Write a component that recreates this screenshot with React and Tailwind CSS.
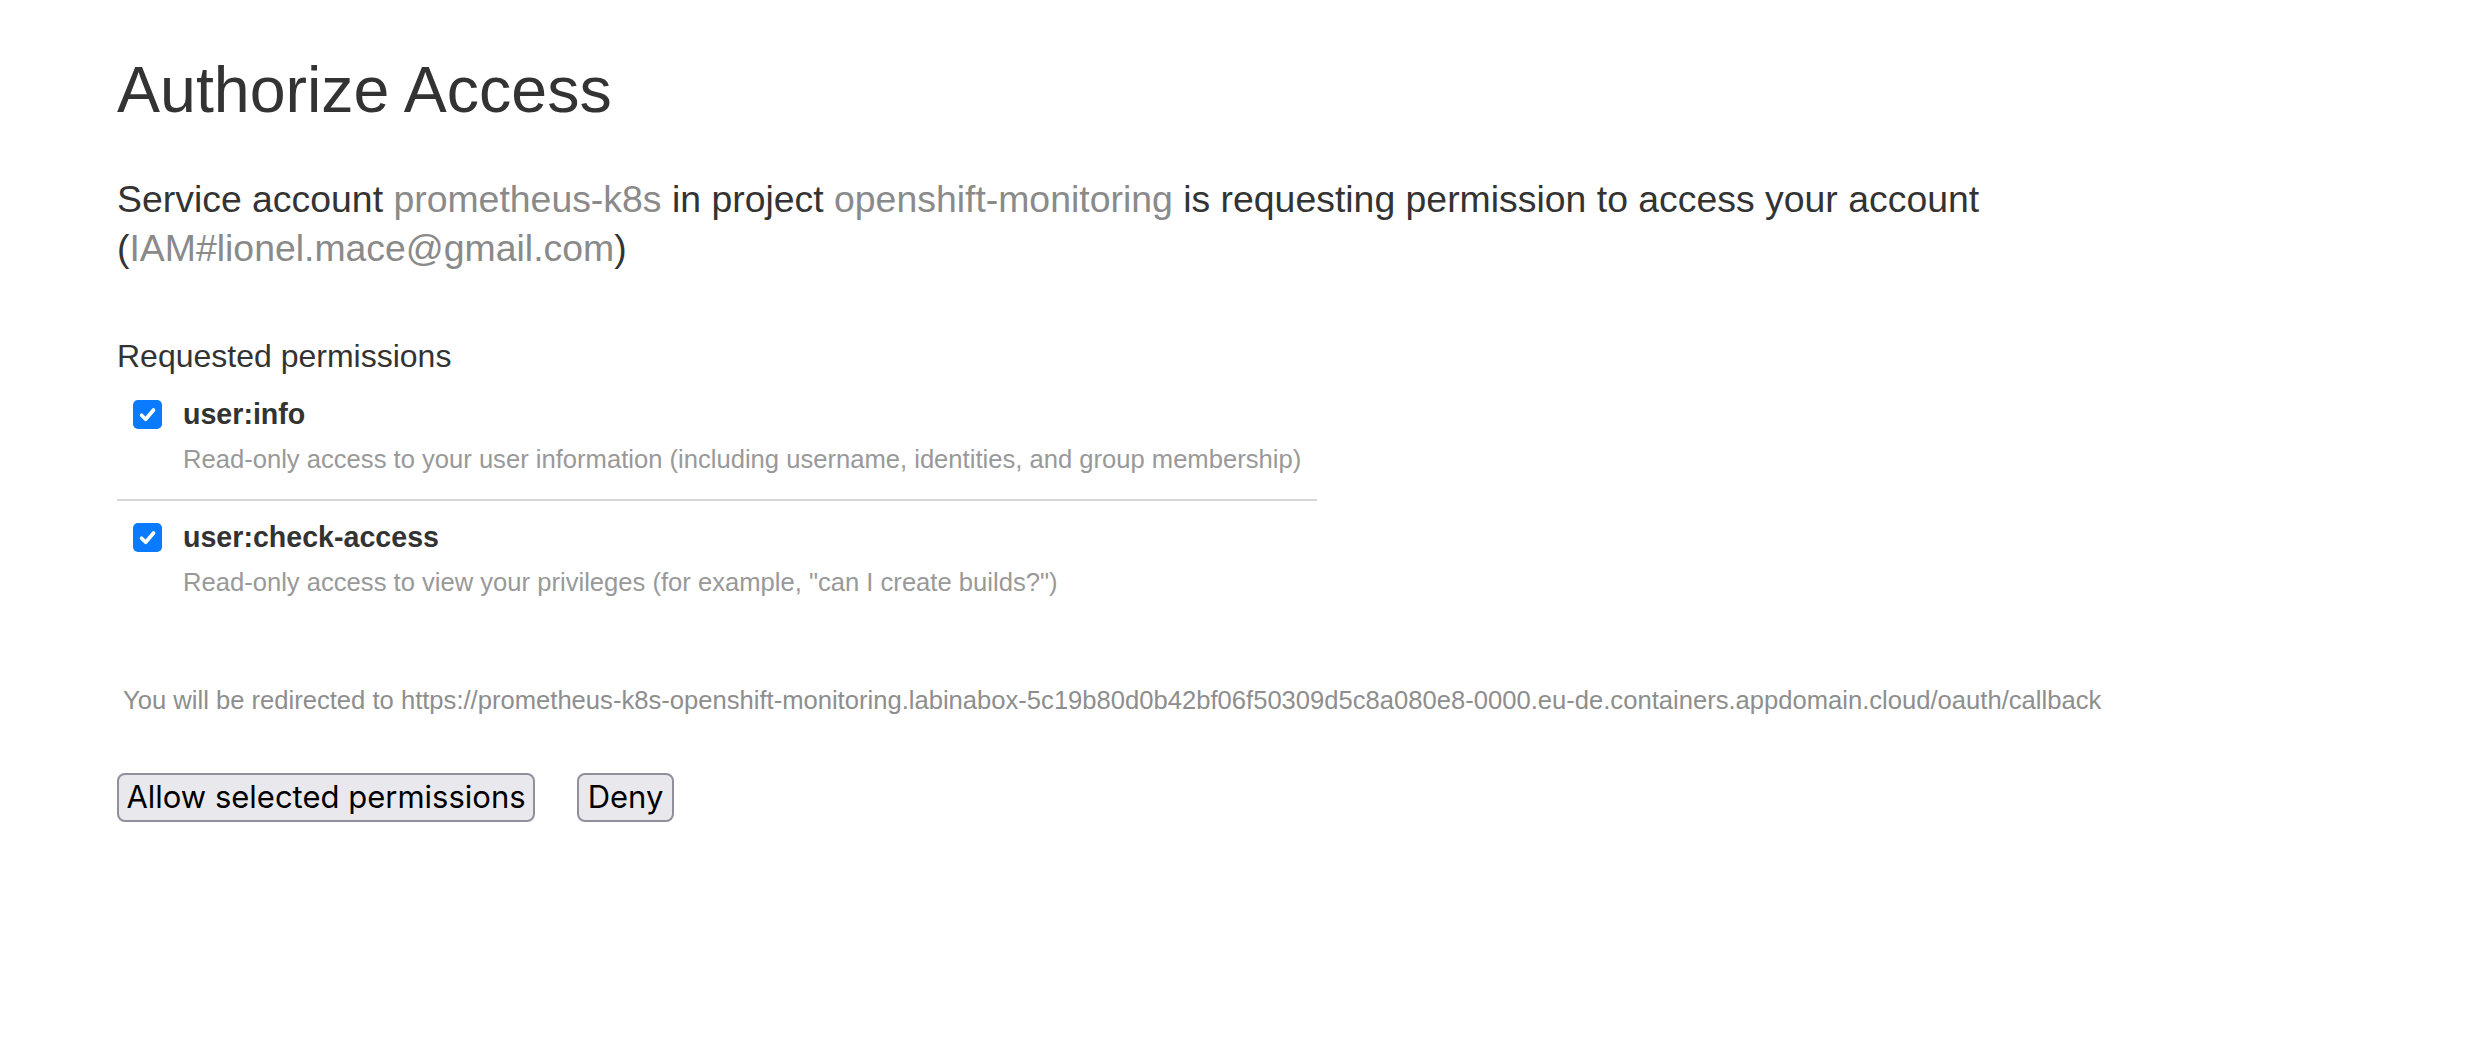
import React, { useState } from 'react';

const permissions = [
  {
    name: 'user:info',
    description:
      'Read-only access to your user information (including username, identities, and group membership)',
  },
  {
    name: 'user:check-access',
    description:
      'Read-only access to view your privileges (for example, "can I create builds?")',
  },
];

const CheckBox = ({ checked, onToggle }) => (
  <button
    type="button"
    onClick={onToggle}
    className={`flex h-[29px] w-[29px] shrink-0 items-center justify-center rounded-[5px] ${checked ? 'bg-[#0a7bff]' : 'border-2 border-[#9a9a9a] bg-white'}`}
  >
    {checked && (
      <svg viewBox="0 0 16 16" className="h-[21px] w-[21px]">
        <path
          d="M3.5 8.6 L6.6 11.6 L12.6 4.6"
          fill="none"
          stroke="white"
          strokeWidth="2.8"
          strokeLinecap="round"
          strokeLinejoin="round"
        />
      </svg>
    )}
  </button>
);

const App = () => {
  const [selected, setSelected] = useState(permissions.map(() => true));

  const toggle = (i) => {
    setSelected(selected.map((v, j) => (j === i ? !v : v)));
  };

  return (
    <main className="min-h-screen w-full bg-white pl-[117px] pt-[54px] font-['Liberation_Sans',Arial,sans-serif]">
      <h1 className="text-[64.5px] leading-[72px] text-[#333333]">Authorize Access</h1>

      <p className="mt-[49px] text-[37.4px] leading-[49px] text-[#333333]">
        Service account <span className="text-[#8a8a8a]">prometheus-k8s</span> in project{' '}
        <span className="text-[#8a8a8a]">openshift-monitoring</span> is requesting permission to access your
        account
        <br />(<span className="text-[#8a8a8a]">IAM#lionel.mace@gmail.com</span>)
      </p>

      <h4 className="mt-[63px] text-[32px] leading-[40px] text-[#333333]">Requested permissions</h4>

      <div className="w-[1200px]">
        {permissions.map((p, i) => (
          <div
            key={p.name}
            className={i === 0 ? 'mt-[20px] pb-[5px]' : 'mt-[18px] border-t-2 border-[#d6d6d6] pt-[18px]'}
          >
            <div className="flex items-center pl-[16px]">
              <CheckBox checked={selected[i]} onToggle={() => toggle(i)} />
              <span className="ml-[21px] text-[28.6px] font-bold leading-[36px] text-[#333333]">{p.name}</span>
            </div>
            <div className="mt-[10px] pl-[66px] text-[25.6px] leading-[34px] text-[#999999]">{p.description}</div>
          </div>
        ))}
      </div>

      <p className="mt-[84px] pl-[6px] text-[25.6px] leading-[34px] text-[#8e8e8e]">
        You will be redirected to
        https://prometheus-k8s-openshift-monitoring.labinabox-5c19b80d0b42bf06f50309d5c8a080e8-0000.eu-de.containers.appdomain.cloud/oauth/callback
      </p>

      <div className="mt-[56px] flex gap-[42px] font-['Inter',sans-serif]">
        <button
          type="submit"
          disabled={!selected.some(Boolean)}
          className="flex h-[49px] w-[418px] items-center justify-center rounded-[8px] border-2 border-[#8f8f9d] bg-[#e9e9ed] text-[31px] text-black"
        >
          Allow selected permissions
        </button>
        <button
          type="button"
          className="flex h-[49px] w-[97px] items-center justify-center rounded-[8px] border-2 border-[#8f8f9d] bg-[#e9e9ed] text-[31px] text-black"
        >
          Deny
        </button>
      </div>
    </main>
  );
};

export default App;
